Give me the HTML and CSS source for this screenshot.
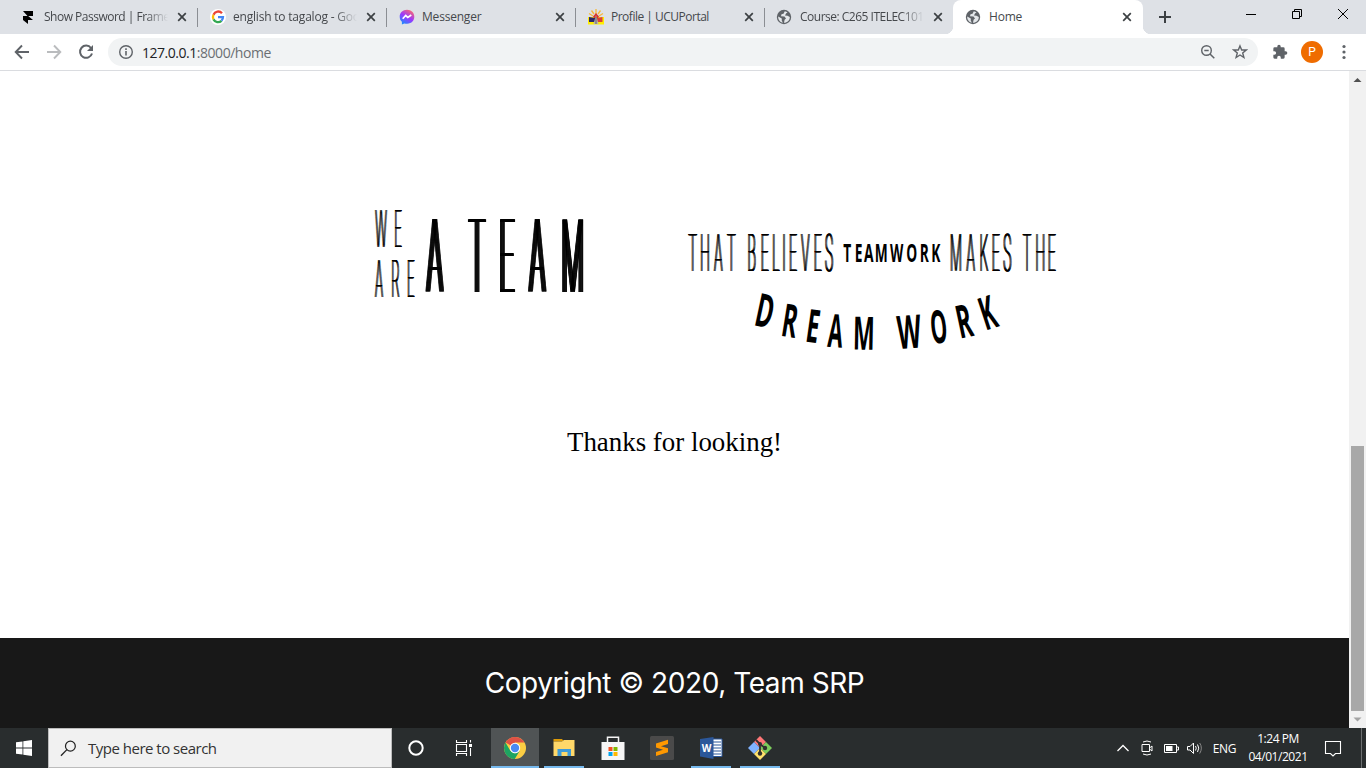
FILE: index.html
```html
<!DOCTYPE html>
<html lang="en">
<head>
<meta charset="utf-8">
<title>Home</title>
<link rel="stylesheet" href="styles.css">
</head>
<body>
<svg class="defs" aria-hidden="true">
  <symbol id="close" viewBox="0 0 10 10"><path d="M1.2 1.2 8.8 8.8M8.8 1.2 1.2 8.8" stroke="#3c4043" stroke-width="1.7"/></symbol>
  <symbol id="globe" viewBox="0 0 16 16"><circle cx="8" cy="8" r="7.2" fill="#5f6368"/><path d="M8.8 2.2 7.5 4.7 5.5 5.2 5 7.2 8.5 7.5 10 9.5 8.6 10.8 8 13.8C11.5 13.8 13.9 11 13.8 8L11.5 6.8 9 6.5 10 4.5 11.5 3.3ZM2.2 7.4 5.8 9.4 5.8 12 7 13.6C4 13.2 2 10.5 2.2 7.4Z" fill="#e4e7ea"/></symbol>
</svg>
<div class="screen">
  <header class="tabs">
    <div class="tab tab-first">
      <svg class="fav" viewBox="0 0 16 16"><path d="M3 2H13V7H8.2L13 11H8V15L3 11V7H7.5Z" fill="#000"/></svg>
      <span class="label fade tight">Show Password | Frame</span><svg class="x"><use href="#close"/></svg>
    </div>
    <div class="tab">
      <svg class="fav" viewBox="0 0 16 16"><circle cx="8" cy="8" r="8" fill="#fff"/><g fill="none" stroke-width="2.3"><path d="M12 4.2A5.1 5.1 0 0 0 3.5 5.7" stroke="#ea4335"/><path d="M3.5 5.7A5.1 5.1 0 0 0 3.5 10.4" stroke="#fbbc05"/><path d="M3.5 10.4A5.1 5.1 0 0 0 11.5 11.8" stroke="#34a853"/><path d="M11.5 11.8Q13 10.3 13 8.1H8" stroke="#4285f4"/></g></svg>
      <span class="label fade">english to tagalog - Goo</span><svg class="x"><use href="#close"/></svg>
    </div>
    <div class="tab">
      <svg class="fav" viewBox="0 0 16 16"><defs><linearGradient id="msg" x1=".2" y1="1" x2=".8" y2="0"><stop stop-color="#1292ff"/><stop offset=".5" stop-color="#9a38ff"/><stop offset="1" stop-color="#ff6b6b"/></linearGradient></defs><path d="M8 .8C3.7.8.7 3.9.7 7.8c0 2.2.8 3.8 2.2 5V15.6L5.3 14.4C12 16 15.3 11.7 15.3 7.8 15.3 3.9 12.3.8 8 .8Z" fill="url(#msg)"/><path d="M3.7 9.8 6.7 6.5 8.8 8.4 12.3 6" fill="none" stroke="#fff" stroke-width="1.7"/></svg>
      <span class="label">Messenger</span><svg class="x"><use href="#close"/></svg>
    </div>
    <div class="tab">
      <svg class="fav" viewBox="0 0 16 16"><path d="M8 6V0M6 5 3.5 1.5M10 5 12.5 1.5M5 7 1 4.5M11 7 15 4.5" stroke="#f6b93b" stroke-width="1.3"/><path d="M0 8H16V15.5H0Z" fill="#ffee00"/><path d="M1 8 7 9V13H1Z" fill="#2c2867"/><path d="M9 9 14.5 8V13H9Z" fill="#d8403a"/><path d="M8 4 11 7.5 10 9H6L5 7.5Z" fill="#d9342b"/><path d="M8 6 10.5 15H5.5Z" fill="#b8b6ad"/><path d="M8 8V15" stroke="#666"/></svg>
      <span class="label tight">Profile | UCUPortal</span><svg class="x"><use href="#close"/></svg>
    </div>
    <div class="tab no-sep">
      <svg class="fav"><use href="#globe"/></svg>
      <span class="label fade tight">Course: C265 ITELEC101</span><svg class="x"><use href="#close"/></svg>
    </div>
    <div class="tab active">
      <svg class="fav"><use href="#globe"/></svg>
      <span class="label">Home</span><svg class="x"><use href="#close"/></svg>
    </div>
    <svg class="plus" viewBox="0 0 14 14"><path d="M7 1V13M1 7H13" stroke="#3c4043" stroke-width="2"/></svg>
    <div class="win">
      <svg viewBox="0 0 12 12"><path d="M1 6.5H11" stroke="#000"/></svg>
      <svg viewBox="0 0 12 12"><path d="M1.5 3.5H8.5V10.5H1.5ZM3.5 3.5V1.5H10.5V8.5H8.5" fill="none" stroke="#000"/></svg>
      <svg viewBox="0 0 12 12"><path d="M1 1 11 11M11 1 1 11" stroke="#000"/></svg>
    </div>
  </header>
  <nav class="toolbar">
    <svg class="tool" viewBox="0 0 16 16"><path d="M15 8H2M8 1.5 1.7 8 8 14.5" fill="none" stroke="#5f6368" stroke-width="1.9"/></svg>
    <svg class="tool" viewBox="0 0 16 16"><path d="M1 8H14M8 1.5 14.3 8 8 14.5" fill="none" stroke="#babcbe" stroke-width="1.9"/></svg>
    <svg class="tool" viewBox="0 0 16 16"><path d="M13 4A6.1 6.1 0 1 0 14 9.5" fill="none" stroke="#5f6368" stroke-width="2"/><path d="M15 1V7H9Z" fill="#5f6368"/></svg>
    <div class="omnibox">
      <svg class="info" viewBox="0 0 16 16"><circle cx="8" cy="8" r="6.3" fill="none" stroke="#5f6368" stroke-width="1.4"/><path d="M8 7V11.5M8 4.3V5.9" stroke="#5f6368" stroke-width="1.6"/></svg>
      <span class="url"><b>127.0.0.1</b>:8000/home</span>
      <svg class="mag" viewBox="0 0 16 16"><circle cx="6.5" cy="6.5" r="4.8" fill="none" stroke="#5f6368" stroke-width="1.4"/><path d="M10 10 14.3 14.3M4.3 6.5H8.7" stroke="#5f6368" stroke-width="1.5"/></svg>
      <svg class="star" viewBox="0 0 16 16"><path d="M8 1.9 9.7 6H14.2L10.7 8.9 11.9 13.5 8 11 4.1 13.5 5.3 8.9 1.8 6H6.3Z" fill="none" stroke="#5f6368" stroke-width="1.4"/></svg>
    </div>
    <svg class="puzzle" viewBox="0 0 24 24"><path d="M20.5 11H19V7a2 2 0 0 0-2-2h-4V3.5a2.5 2.5 0 0 0-5 0V5H4a2 2 0 0 0-2 2v3.8h1.5a2.7 2.7 0 0 1 0 5.4H2V20a2 2 0 0 0 2 2h3.8v-1.5a2.7 2.7 0 0 1 5.4 0V22H17a2 2 0 0 0 2-2v-4h1.5a2.5 2.5 0 0 0 0-5Z" fill="#5f6368"/></svg>
    <span class="avatar">P</span>
    <svg class="dots" viewBox="0 0 4 16"><g fill="#5f6368"><circle cx="2" cy="2.5" r="1.6"/><circle cx="2" cy="8" r="1.6"/><circle cx="2" cy="13.5" r="1.6"/></g></svg>
  </nav>
  <div class="viewport">
    <div class="page">
      <main class="content">
        <svg class="lettering" viewBox="360 195 710 165">
          <g class="thin">
            <text class="s2" transform="translate(0 247) scale(.25 1)" font-size="51" x="1524 1592">WE</text>
            <text class="s2" transform="translate(0 297) scale(.25 1)" font-size="51" x="1516 1582 1643">ARE</text>
            <text class="s4" transform="translate(0 292) scale(.25 1)" font-size="102.5" x="1739 1823 1908 2027 2149 2291">A TEAM</text>
            <text class="s2" transform="translate(0 271) scale(.27 1)" font-size="51" x="2565.6 2611 2660.4 2708.5 2745 2784 2832.2 2873 2903.7 2937 2982.6 3028.5 3070.4">THAT BELIEVES</text>
            <text class="s2" transform="translate(0 271) scale(.27 1)" font-size="51" x="3540.7 3595 3644.4 3687.8 3730.7 3767 3803.7 3853 3895.2">MAKES THE</text>
          </g>
          <g class="bold">
            <text transform="translate(0 261.7) scale(.54 1)" font-size="25.5" x="1569 1590.2 1608.7 1632.1 1660.6 1688.3 1711.7 1732.8">TEAMWORK</text>
            <g font-size="46">
              <text transform="translate(765 310.7) rotate(12) scale(.52 1)" y="16.5">D</text>
              <text transform="translate(790 320.7) rotate(9) scale(.5 1)" y="16.5">R</text>
              <text transform="translate(813.3 326) rotate(8) scale(.5 1)" y="16.5">E</text>
              <text transform="translate(835.7 330.7) rotate(4) scale(.47 1)" y="16.5">A</text>
              <text transform="translate(864 333.3) rotate(1) scale(.5 1)" y="16.5">M</text>
              <text transform="translate(909 331.7) rotate(-4) scale(.54 1)" y="16.5">W</text>
              <text transform="translate(938.7 326.7) rotate(-6) scale(.46 1)" y="16.5">O</text>
              <text transform="translate(964 321) rotate(-12) scale(.5 1)" y="16.5">R</text>
              <text transform="translate(987.7 312.7) rotate(-18) scale(.5 1)" y="16.5">K</text>
            </g>
          </g>
        </svg>
        <p class="thanks">Thanks for looking!</p>
      </main>
      <footer class="footer"><span>Copyright © 2020, Team SRP</span></footer>
    </div>
    <div class="scroll">
      <svg viewBox="0 0 17 17"><path d="M4.5 11 8.5 7 12.5 11Z" fill="#505050"/></svg>
      <i class="thumb"></i>
      <svg viewBox="0 0 17 17"><path d="M4.5 6.5 8.5 10.5 12.5 6.5Z" fill="#a3a3a3"/></svg>
    </div>
  </div>
  <footer class="taskbar">
    <div class="start"><svg viewBox="0 0 16 16"><path d="M0 2.3 6.5 1.4V7.5H0ZM7.3 1.3 16 0V7.5H7.3ZM0 8.4H6.5V14.6L0 13.7ZM7.3 8.4H16V16L7.3 14.7Z" fill="#fff"/></svg></div>
    <div class="search"><svg viewBox="0 0 18 18"><circle cx="11" cy="6.5" r="5.2" fill="none" stroke="#222" stroke-width="1.3"/><path d="M7.3 10.2 1 16.7" stroke="#222" stroke-width="1.4"/></svg><span>Type here to search</span></div>
    <div class="apps">
      <div class="app shift"><svg viewBox="0 0 24 24"><circle cx="12" cy="12" r="6.7" fill="none" stroke="#fff" stroke-width="2"/></svg></div>
      <div class="app shift"><svg viewBox="0 0 24 24" fill="none" stroke="#fff"><path d="M3.500 4V6.500H13.500V4M3.500 20V17.500H13.500V20M3.500 8.500H13.500V15.500H3.500ZM17.500 4V6.500M17.500 12V20" stroke-width="1.100"/><path d="M16 8H19V11H16Z" fill="#fff" stroke="none"/></svg></div>
      <div class="app open current"><svg viewBox="0 0 24 24"><circle cx="12" cy="12" r="11" fill="#fbcd43"/><path d="M12 12 2.5 6.5A11 11 0 0 1 21.5 6.5H12Z" fill="#de5246"/><path d="M2.5 6.5A11 11 0 0 0 11.8 23L16.7 14.7 12 17.5 7.3 14.7Z" fill="#1da462"/><circle cx="12" cy="12" r="5.2" fill="#fff"/><circle cx="12" cy="12" r="4.2" fill="#4a8af4"/></svg></div>
      <div class="app open"><svg viewBox="0 0 24 24"><path d="M1.5 3H10L12 5.5H1.5Z" fill="#dd9b08"/><path d="M1.5 5.5 10 5.5 12 4H22.5V20H1.5Z" fill="#ffd869"/><path d="M5.5 20V13H19V20H15.5V16H9.5V20Z" fill="#3f9bd8"/></svg></div>
      <div class="app"><svg viewBox="0 0 24 24"><path d="M6.5 8V1.2H17.5V8" fill="none" stroke="#f5f5f5" stroke-width="1.5"/><path d="M.5 6H23.5V24H.5Z" fill="#f6f6f6"/><path d="M7.5 11H11.5V15H7.5Z" fill="#f25022"/><path d="M12.5 11H16.5V15H12.5Z" fill="#7fba00"/><path d="M7.5 16H11.5V20H7.5Z" fill="#00a4ef"/><path d="M12.5 16H16.5V20H12.5Z" fill="#ffb900"/></svg></div>
      <div class="app"><svg viewBox="0 0 24 24"><rect width="24" height="24" rx="1.5" fill="#4a4a4a"/><path d="M6 7.5 18 3.8V8L11 10.2 18 12.3V16.3L6 20V16L13 13.7 6 11.5Z" fill="#ff9800"/></svg></div>
      <div class="app open"><svg viewBox="0 0 24 24"><path d="M13 3H23V20.5H13Z" fill="#fff" stroke="#2b579a"/><path d="M14 6H22M14 9H22M14 12H22M14 15H22M14 18H22" stroke="#2b579a"/><path d="M1 3 14.5 1V23L1 20.5Z" fill="#2b579a"/><text class="w" x="7.7" y="15.5">W</text></svg></div>
      <div class="app open"><svg viewBox="0 0 24 24"><path d="M12 0 18 6 12 12 6 6Z" fill="#f77"/><path d="M6 6 12 12 6 18 0 12Z" fill="#80b3ff"/><path d="M18 6 24 12 18 18 12 12Z" fill="#7ccc5c"/><path d="M12 12 18 18 12 24 6 18Z" fill="#ffe16b"/><path d="M8 4 12 8V18M12 8 17 12" stroke="#303030" stroke-width="1.8" fill="none"/><circle cx="12" cy="8" r="2" fill="#303030"/><circle cx="17" cy="12" r="2.2" fill="#303030"/><circle cx="12" cy="17.5" r="2.2" fill="#303030"/></svg></div>
    </div>
    <div class="tray">
      <svg viewBox="0 0 16 16"><path d="M2.5 11 8 5.5 13.5 11" fill="none" stroke="#fff" stroke-width="1.3"/></svg>
      <svg viewBox="0 0 16 16" fill="none" stroke="#fff"><path d="M3 4.5H10.5V11.5H3ZM10.5 8 13 6V11L10.5 9M4 2Q8 0 12 2M4 14Q8 16 12 14"/></svg>
      <svg viewBox="0 0 16 16"><path d="M1.5 4.5H13.5V12.5H1.5ZM14 7H15.5V10H14" fill="none" stroke="#fff"/><path d="M3 6H9.5V11H3Z" fill="#fff"/></svg>
      <svg viewBox="0 0 16 16" fill="none" stroke="#fff"><path d="M.5 6.5H3L6.5 3V13.5L3 10H.5ZM8.5 6Q10 8 8.5 10.5M10.5 4.5Q13 8 10.5 12"/><path d="M12.7 3Q16 8 12.7 13.5" stroke="#888"/></svg>
      <span class="lang">ENG</span>
      <div class="clock"><span>1:24 PM</span><span class="date">04/01/2021</span></div>
      <svg class="note" viewBox="0 0 18 18"><path d="M1.5 2.5H16.5V14.5H11.5L9 17 6.5 14.5H1.5Z" fill="none" stroke="#fff" stroke-width="1.1"/></svg>
      <i class="peek"></i>
    </div>
  </footer>
</div>
</body>
</html>
```
FILE: styles.css
```css
*{box-sizing:border-box}
body{margin:0;overflow:hidden;font-family:"Open Sans","Noto Sans",sans-serif}
svg{display:block;flex:none}
.defs{width:0;height:0;position:absolute}
.screen{width:1366px;height:768px;display:flex;flex-direction:column;background:#fff}
.tabs{height:34px;flex:none;background:#dee1e6;display:flex;align-items:stretch}
.tab{width:189px;flex:none;display:flex;align-items:center;padding:0 10px 0 12px;position:relative;font-size:12px;color:#45484c}
.tab-first{width:198px;padding-left:20px}
.tab::after{content:"";position:absolute;right:0;top:8px;width:1px;height:19px;background:#8b8e93}
.no-sep::after,.active::after{display:none}
.no-sep{width:188px;padding-left:11px}
.fav{width:16px;height:16px;margin-right:7px}
.label{width:124px;flex:none;overflow:hidden;white-space:nowrap;line-height:18px;letter-spacing:-.2px}
.tight{letter-spacing:-.5px}
.tab-first .label,.no-sep .label,.active .label{margin-left:1px}
.fade{-webkit-mask-image:linear-gradient(90deg,#000 82%,transparent);mask-image:linear-gradient(90deg,#000 82%,transparent)}
.x{width:10px;height:10px;margin-left:auto}
.tab:not(.active) .x{margin-right:1px}
.tab.no-sep .x{margin-right:0}
.active{width:190px;background:#fff;border-radius:8px 8px 0 0;padding-right:11px}
.active::before{content:"";position:absolute;left:-8px;right:-8px;bottom:0;height:8px;background:radial-gradient(circle at 0 0,transparent 8px,#fff 8.5px) 0 0/8px 8px no-repeat,radial-gradient(circle at 100% 0,transparent 8px,#fff 8.5px) 100% 0/8px 8px no-repeat}
.plus{width:14px;height:14px;margin:10px 0 0 15px}
.win{margin:8px 17px 0 auto;display:flex;gap:34px}
.win svg{width:12px;height:12px}
.toolbar{height:37px;flex:none;display:flex;align-items:center;padding:0 19px 0 14px;border-bottom:1px solid #dadce0}
.tool{width:16px;height:16px;margin-right:16px}
.tool:nth-child(3){margin-right:14px}
.omnibox{width:1150px;height:28px;flex:none;border-radius:14px;background:#f1f3f4;display:flex;align-items:center;padding:0 10px}
.info{width:16px;height:16px;margin-right:8px}
.url{font-size:14px;color:#6b6f73;letter-spacing:-.47px}
.url b{font-weight:400;color:#202124}
.mag{width:16px;height:16px;margin-left:auto}
.star{width:16px;height:16px;margin-left:16px}
.puzzle{width:16px;height:16px;margin-left:14px}
.avatar{width:22px;height:22px;flex:none;margin-left:13px;border-radius:50%;background:#ef6c00;color:#fff;font:12px/22px Roboto,sans-serif;text-align:center}
.dots{width:4px;height:16px;margin-left:19px}
.viewport{height:657px;flex:none;display:flex}
.page{width:1349px;display:flex;flex-direction:column}
.content{height:567px;padding-top:124px}
.lettering{width:710px;height:165px;margin-left:360px}
.lettering text{text-anchor:middle;font-kerning:none;white-space:pre}
.thin{font-family:Roboto,sans-serif;font-weight:100}
/* Horizontal shadows thicken only the vertical stems of the condensed letters */
.s2{text-shadow:-2px 0 #000,-1px 0 #000,1px 0 #000,2px 0 #000}
.s4{text-shadow:-6px 0 #000,-5px 0 #000,-4px 0 #000,-3px 0 #000,-2px 0 #000,-1px 0 #000,1px 0 #000,2px 0 #000,3px 0 #000,4px 0 #000,5px 0 #000,6px 0 #000}
.bold{font-family:"Open Sans",sans-serif;font-weight:700}
.thanks{margin:66px 0 0;font:26.9px/32px "Liberation Serif",serif;text-align:center;color:#000}
.footer{height:90px;background:#181818;color:#fff;display:flex;align-items:center;justify-content:center;font:28px/40px Inter,sans-serif;letter-spacing:-.43px}
.scroll{width:17px;background:#f1f1f1;display:flex;flex-direction:column}
.scroll svg{width:17px;height:17px}
.thumb{width:13px;height:265px;margin:auto 2px 0;background:#a8a8a8}
.taskbar{height:40px;display:flex;background:#292d2e;color:#fff}
.start{width:48px;display:flex;align-items:center;justify-content:center}
.start svg{width:16px;height:16px}
.search{width:344px;background:#f1f1f1;border:1px solid #bcbcbc;color:#333;display:flex;align-items:center;padding-left:11px;font-size:15px}
.search svg{width:17px;height:17px;margin-right:11px}
.search span{letter-spacing:-.5px}
.apps{display:flex;gap:1px;padding-left:1px}
.app{width:48px;height:40px;display:flex;align-items:center;justify-content:center;position:relative}
.shift{padding-right:2px}
.app svg{width:24px;height:24px}
.open::after{content:"";position:absolute;left:4px;right:4px;bottom:0;height:2px;background:#76b9ed}
.current{background:#505455}
.current::after{left:0;right:0}
.w{font:bold 10px "Open Sans",sans-serif;fill:#fff;text-anchor:middle}
.tray{margin-left:auto;display:flex;align-items:center;font-size:12px}
.tray svg{width:16px;height:16px;margin-right:8px}
.tray svg:nth-child(4){margin-right:10px}
.lang{letter-spacing:-.4px}
.clock{width:60px;margin-left:12px;display:flex;flex-direction:column;align-items:center;line-height:18px;letter-spacing:-.45px;white-space:nowrap}
.tray .note{width:18px;height:18px;margin:0 19px 0 16px}
.peek{width:1px;height:40px;margin-right:4px;background:#6c6f70}
```
